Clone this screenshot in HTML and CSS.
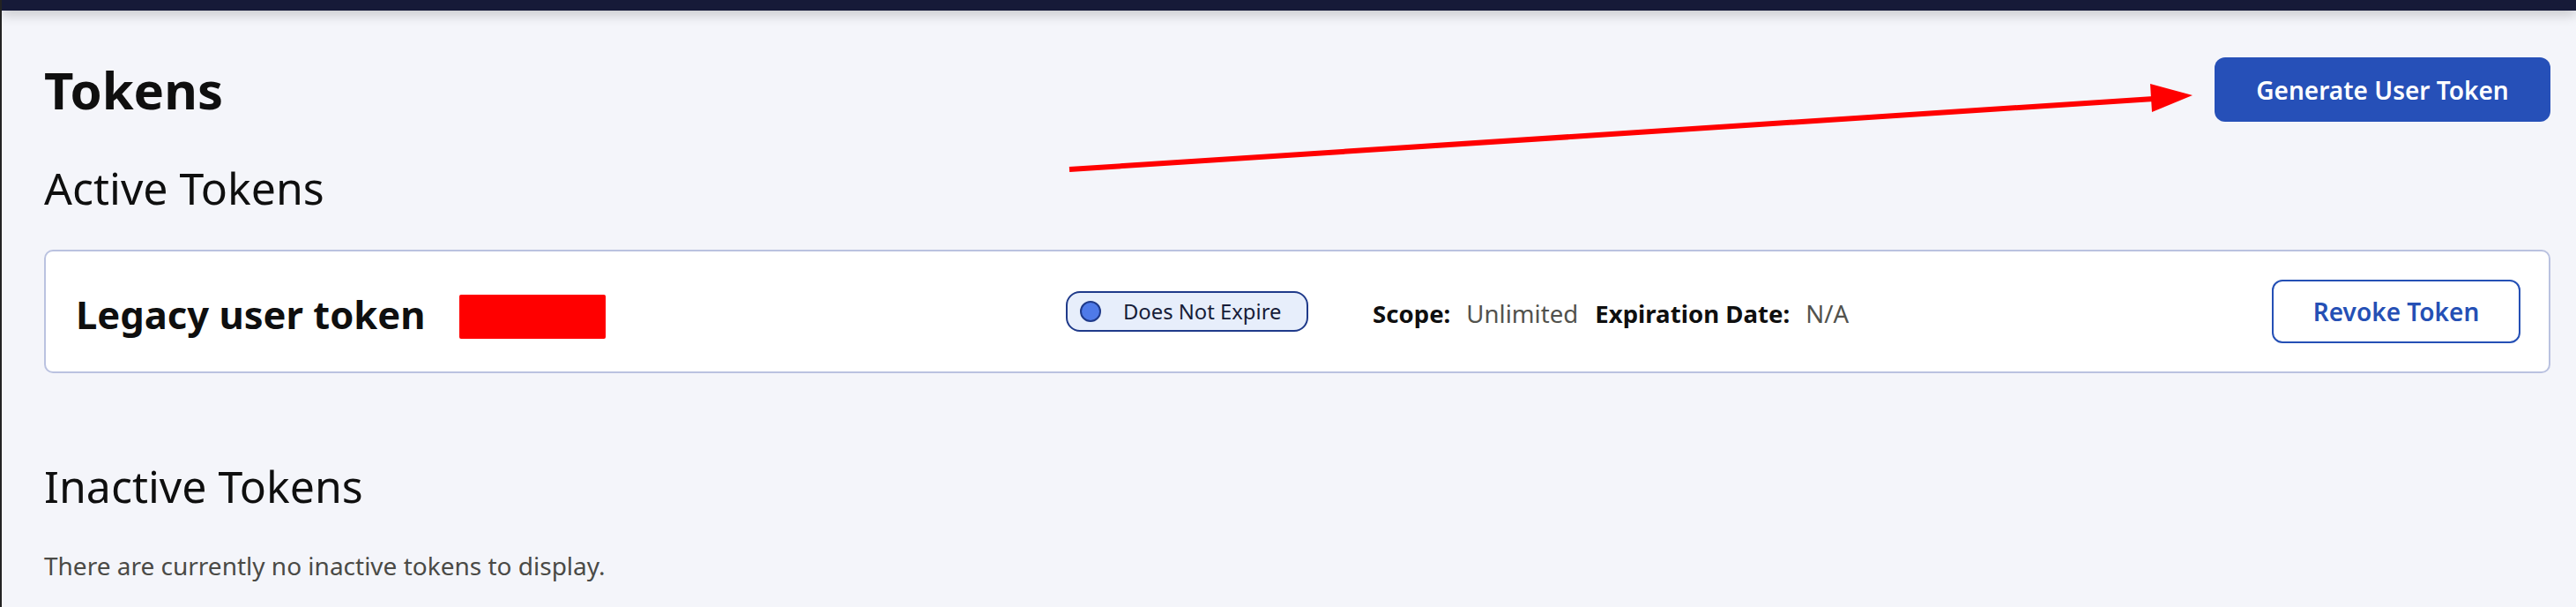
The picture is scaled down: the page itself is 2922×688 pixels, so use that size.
FILE: index.html
```html
<!DOCTYPE html>
<html lang="en">
<head>
<meta charset="utf-8">
<title>Tokens</title>
<link rel="stylesheet" href="styles.css">
</head>
<body>
<div class="frame">
  <div class="topbar"></div>
  <main class="page">
    <div class="header">
      <h1 class="title">Tokens</h1>
      <button class="btn-primary">Generate User Token</button>
    </div>
    <h2 class="section-title">Active Tokens</h2>
    <div class="card">
      <div class="card-name">
        <span class="token-name">Legacy user token</span>
        <span class="redact"></span>
      </div>
      <span class="badge"><span class="dot"></span>Does Not Expire</span>
      <div class="meta">
        <span class="label">Scope:</span><span class="value">Unlimited</span>
        <span class="label">Expiration Date:</span><span class="value">N/A</span>
      </div>
      <div class="spacer"></div>
      <button class="btn-outline">Revoke Token</button>
    </div>
    <h2 class="section-title inactive">Inactive Tokens</h2>
    <p class="empty">There are currently no inactive tokens to display.</p>
  </main>
  <svg class="annotation" width="2922" height="688" viewBox="0 0 2922 688">
    <line x1="1213" y1="192" x2="2443" y2="112" stroke="#ff0000" stroke-width="6"/>
    <polygon points="2439,95 2487,108 2441,127" fill="#ff0000"/>
  </svg>
</div>
</body>
</html>
```
FILE: styles.css
```css
html, body {
  margin: 0;
  padding: 0;
}
body {
  background: #f4f5fa;
  font-family: "Noto Sans", "Open Sans", sans-serif;
  color: #0f0f0f;
}
.frame {
  position: relative;
  border-left: 2px solid #232323;
  min-height: 688px;
  box-sizing: border-box;
  overflow: hidden;
}
.topbar {
  height: 12px;
  background: #161a38;
  box-shadow: 0 4px 14px rgba(0, 0, 0, 0.22);
  position: relative;
  z-index: 1;
}
.page {
  padding: 50px 29px 0 48px;
}
.header {
  display: flex;
  align-items: center;
  justify-content: space-between;
  height: 79px;
}
.title {
  margin: 0;
  font-size: 58px;
  font-weight: 700;
  line-height: 79px;
}
.btn-primary {
  height: 73px;
  width: 381px;
  border: none;
  border-radius: 12px;
  background: #2650b8;
  color: #ffffff;
  font-family: "Noto Sans", sans-serif;
  font-size: 28px;
  font-weight: 600;
  padding: 0;
}
.section-title {
  margin: 38px 0 0 0;
  font-size: 50px;
  font-weight: 400;
  line-height: 68px;
}
.card {
  margin-top: 36px;
  height: 140px;
  box-sizing: border-box;
  background: #ffffff;
  border: 2px solid #bac2e0;
  border-radius: 10px;
  display: flex;
  align-items: center;
  padding: 0 32px 0 34px;
}
.card-name {
  flex: 0 0 1123px;
  display: flex;
  align-items: center;
}
.token-name {
  font-size: 43.5px;
  font-weight: 700;
  line-height: 60px;
  margin-top: 6px;
}
.redact {
  display: block;
  width: 166px;
  height: 50px;
  background: #ff0000;
  border-radius: 2px;
  margin-left: 38px;
  margin-top: 12px;
}
.badge {
  display: flex;
  align-items: center;
  box-sizing: border-box;
  width: 275px;
  height: 46px;
  border: 2px solid #1f3a8a;
  border-radius: 16px;
  background: #e7eefb;
  color: #161c38;
  font-size: 23.8px;
  padding-left: 14px;
}
.dot {
  width: 24px;
  height: 24px;
  box-sizing: border-box;
  border-radius: 50%;
  background: #4f7ae8;
  border: 2px solid #1f3a8a;
  margin-right: 25px;
}
.meta {
  margin-left: 73px;
  font-size: 27.6px;
  display: flex;
  align-items: baseline;
  margin-top: 4px;
}
.label {
  font-weight: 700;
  color: #0f0f0f;
  margin-right: 18px;
}
.value {
  color: #52524d;
  margin-right: 19px;
}
.spacer {
  flex: 1;
}
.btn-outline {
  width: 282px;
  height: 72px;
  box-sizing: border-box;
  background: #ffffff;
  border: 2px solid #2550b5;
  border-radius: 12px;
  color: #2550b5;
  font-family: "Noto Sans", sans-serif;
  font-size: 28px;
  font-weight: 600;
  padding: 0;
}
.section-title.inactive {
  margin-top: 94px;
}
.empty {
  margin: 38px 0 0 0;
  font-size: 28px;
  line-height: 37px;
  color: #4a4a46;
}
.annotation {
  position: absolute;
  left: -2px;
  top: 0;
  pointer-events: none;
}
```
